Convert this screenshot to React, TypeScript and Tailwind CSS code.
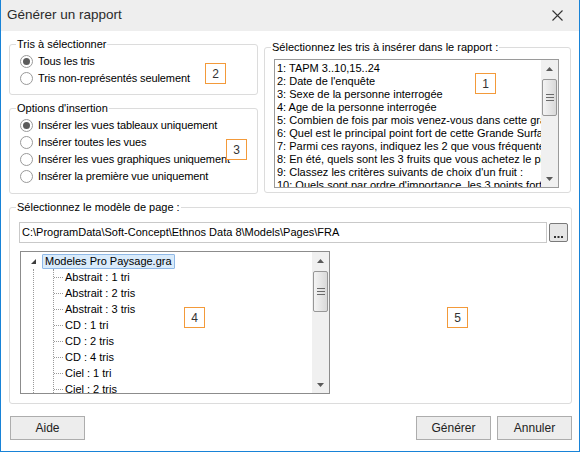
import React from "react";

const listItems = [
  "1: TAPM 3..10,15..24",
  "2: Date de l'enquête",
  "3: Sexe de la personne interrogée",
  "4: Age de la personne interrogée",
  "5: Combien de fois par mois venez-vous dans cette grande surface ?",
  "6: Quel est le principal point fort de cette Grande Surface ?",
  "7: Parmi ces rayons, indiquez les 2 que vous fréquentez le plus",
  "8: En été, quels sont les 3 fruits que vous achetez le plus ?",
  "9: Classez les critères suivants de choix d'un fruit :",
  "10: Quels sont par ordre d'importance, les 3 points forts de cette surface ?",
];

const treeItems = [
  "Abstrait : 1 tri",
  "Abstrait : 2 tris",
  "Abstrait : 3 tris",
  "CD : 1 tri",
  "CD : 2 tris",
  "CD : 4 tris",
  "Ciel : 1 tri",
  "Ciel : 2 tris",
  "Ciel : 3 tris",
];

function Radio({ label, checked }: { label: string; checked?: boolean }) {
  return (
    <div className="flex items-center h-[17px]">
      <div className="w-[13px] h-[13px] rounded-full border border-[#9a9a9a] bg-white flex items-center justify-center shrink-0">
        {checked && <div className="w-[7px] h-[7px] rounded-full bg-[#5c5c5c]" />}
      </div>
      <span className="ml-[5px] whitespace-nowrap tracking-[-0.1px]">{label}</span>
    </div>
  );
}

function Tag({ n, className }: { n: string; className: string }) {
  return (
    <div
      className={
        "absolute w-[21px] h-[21px] border border-[#f39a3a] flex items-center justify-center text-[12px] text-[#333] bg-white " +
        className
      }
    >
      {n}
    </div>
  );
}

function Arrow({ up }: { up?: boolean }) {
  return (
    <svg width="7" height="4" viewBox="0 0 7 4">
      <path d={up ? "M0 4 L3.5 0 L7 4 Z" : "M0 0 L3.5 4 L7 0 Z"} fill="#5a5a5a" />
    </svg>
  );
}

function ScrollBar({ thumb }: { thumb: string }) {
  return (
    <div className="w-[17px] h-full bg-[#f0f0f0] flex flex-col shrink-0">
      <div className="h-[18px] flex items-center justify-center shrink-0">
        <Arrow up />
      </div>
      <div
        className={
          "mt-[1px] mx-[1px] rounded-[2px] border border-[#979797] bg-linear-to-r from-[#f4f4f4] to-[#d9d9d9] flex items-center justify-center shrink-0 " +
          thumb
        }
      >
        <svg width="8" height="7" viewBox="0 0 8 7">
          <rect x="0" y="0" width="8" height="1" fill="#6a6a6a" />
          <rect x="0" y="3" width="8" height="1" fill="#6a6a6a" />
          <rect x="0" y="6" width="8" height="1" fill="#6a6a6a" />
        </svg>
      </div>
      <div className="flex-1" />
      <div className="h-[17px] flex items-center justify-center shrink-0">
        <Arrow />
      </div>
    </div>
  );
}

function Button({ label }: { label: string }) {
  return (
    <button className="w-[75px] h-[24px] border border-[#adadad] bg-[#ededed] text-[12px] text-[#222] flex items-center justify-center">
      {label}
    </button>
  );
}

export default function App() {
  return (
    <div className="w-[580px] h-[452px] flex flex-col bg-white border-l border-r border-b border-[#1883d7] font-['Liberation_Sans',Arial,sans-serif] text-[11px] text-black overflow-hidden">
      {/* Title bar */}
      <div className="h-[31px] bg-[#eeeeee] flex items-center justify-between shrink-0">
        <span className="ml-[6px] text-[13.5px] text-[#2a2a2a]">Générer un rapport</span>
        <svg className="mr-[16px]" width="11" height="11" viewBox="0 0 11 11">
          <path d="M0.5 0.5 L10.5 10.5 M10.5 0.5 L0.5 10.5" stroke="#333" strokeWidth="1.1" />
        </svg>
      </div>

      {/* Body */}
      <div className="flex-1 flex flex-col pt-[6px] pl-[8px] pr-[7px]">
        <div className="flex gap-[6px]">
          {/* Left column */}
          <div className="w-[249px] shrink-0 flex flex-col gap-[6px]">
            <fieldset className="relative min-w-0 h-[58px] border border-[#dcdcdc] rounded-[3px] pl-[10px]">
              <legend className="-ml-[4px] px-[1px] leading-[14px]">Tris à sélectionner</legend>
              <div className="flex flex-col pt-[2px]">
                <Radio label="Tous les tris" checked />
                <Radio label="Tris non-représentés seulement" />
              </div>
              <Tag n="2" className="left-[195px] top-[12px]" />
            </fieldset>
            <fieldset className="relative min-w-0 h-[93px] border border-[#dcdcdc] rounded-[3px] pl-[10px]">
              <legend className="-ml-[4px] px-[1px] leading-[14px]">Options d'insertion</legend>
              <div className="flex flex-col pt-[2px]">
                <Radio label="Insérer les vues tableaux uniquement" checked />
                <Radio label="Insérer toutes les vues" />
                <Radio label="Insérer les vues graphiques uniquement" />
                <Radio label="Insérer la première vue uniquement" />
              </div>
              <Tag n="3" className="left-[216px] top-[24px]" />
            </fieldset>
          </div>

          {/* Right column */}
          <fieldset className="min-w-0 w-[307px] shrink-0 h-[153px] mt-[3px] border border-[#dcdcdc] rounded-[3px] pl-[9px] pr-[11px]">
            <legend className="-ml-[3px] px-[1px] leading-[14px]">
              Sélectionnez les tris à insérer dans le rapport :
            </legend>
            <div className="relative mt-[5px] h-[129px] border border-[#9a9a9a] flex">
              <div className="flex-1 min-w-0 overflow-hidden pt-[2px] pl-[2px]">
                {listItems.map((t) => (
                  <div key={t} className="leading-[13px] whitespace-nowrap">
                    {t}
                  </div>
                ))}
              </div>
              <ScrollBar thumb="h-[37px]" />
              <Tag n="1" className="left-[200px] top-[13px]" />
            </div>
          </fieldset>
        </div>

        {/* Page model */}
        <fieldset className="min-w-0 mt-[6px] h-[204px] border border-[#dcdcdc] rounded-[3px] pl-[9px] pr-[3px]">
          <legend className="-ml-[3px] px-[1px] leading-[14px]">Sélectionnez le modèle de page :</legend>
          <div className="mt-[8px] flex items-start gap-[2px]">
            <div className="flex-1 min-w-0 h-[21px] border border-[#c9c9c9] flex items-center pl-[2px] whitespace-nowrap overflow-hidden">
              C:\ProgramData\Soft-Concept\Ethnos Data 8\Models\Pages\FRA
            </div>
            <div className="w-[19px] h-[19px] mt-[1px] border border-[#7a7a7a] rounded-[2px] bg-[#e6e6e6] flex items-end justify-center pb-[3px]">
              <svg width="9" height="2" viewBox="0 0 9 2">
                <rect x="0" y="0" width="2" height="2" fill="#333" />
                <rect x="3.5" y="0" width="2" height="2" fill="#333" />
                <rect x="7" y="0" width="2" height="2" fill="#333" />
              </svg>
            </div>
          </div>
          <div className="mt-[8px] flex">
            <div className="relative ml-[1px] w-[310px] h-[143px] border border-[#8c8c8c] flex">
              <div className="flex-1 min-w-0 overflow-hidden pt-[2px]">
                <div className="flex items-center h-[15px]">
                  <svg className="ml-[10px]" width="5" height="5" viewBox="0 0 5 5">
                    <path d="M5 0 L5 5 L0 5 Z" fill="#3c3c3c" />
                  </svg>
                  <div className="ml-[6px] h-[15px] px-[2px] border border-[#8fb8e6] bg-[#d9ebfb] rounded-[1px] flex items-center whitespace-nowrap">
                    Modeles Pro Paysage.gra
                  </div>
                </div>
                <div className="ml-[12px] border-l border-dotted border-[#9a9a9a]">
                  <div className="ml-[19px] border-l border-dotted border-[#9a9a9a]">
                    {treeItems.map((t) => (
                      <div key={t} className="flex items-center h-[16px]">
                        <div className="w-[9px] border-t border-dotted border-[#9a9a9a]" />
                        <span className="ml-[2px] whitespace-nowrap">{t}</span>
                      </div>
                    ))}
                  </div>
                </div>
              </div>
              <ScrollBar thumb="h-[41px]" />
              <Tag n="4" className="left-[163px] top-[55px]" />
            </div>
            <div className="relative flex-1">
              <Tag n="5" className="left-[117px] top-[56px]" />
            </div>
          </div>
        </fieldset>

        {/* Buttons */}
        <div className="mt-[12px] flex items-center">
          <div className="ml-[1px]">
            <Button label="Aide" />
          </div>
          <div className="flex-1" />
          <div className="flex gap-[6px]">
            <Button label="Générer" />
            <Button label="Annuler" />
          </div>
        </div>
      </div>
    </div>
  );
}
